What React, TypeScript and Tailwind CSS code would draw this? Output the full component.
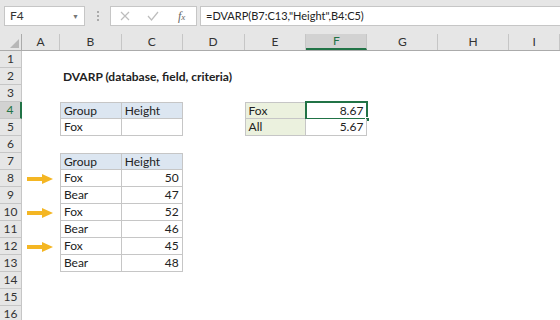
import React from "react";

const cols = ["A", "B", "C", "D", "E", "F", "G", "H", "I"];
const colWidths = [38, 62, 61, 62, 62, 61, 71, 71, 51];

const border = "border-[#c6c6c6]";

function Arrow() {
  return (
    <svg width="26" height="10" viewBox="0 0 26 10">
      <rect x="0" y="3" width="17" height="4" fill="#f4b623" />
      <path d="M15 0 L26 5 L15 10 Z" fill="#f4b623" />
    </svg>
  );
}

function tableCell(text: string, opts: { head?: boolean; right?: boolean; top?: boolean; left?: boolean; green?: boolean }) {
  return (
    <div
      className={
        "flex h-full items-center border-r border-b px-[3px] " +
        border +
        (opts.top ? " border-t" : "") +
        (opts.left ? " border-l" : "") +
        (opts.head ? " bg-[#dce6f1]" : opts.green ? " bg-[#ebf1de]" : " bg-white") +
        (opts.right ? " justify-end" : "")
      }
    >
      {text}
    </div>
  );
}

export default function App() {
  const data: [string, string][] = [
    ["Fox", "50"],
    ["Bear", "47"],
    ["Fox", "52"],
    ["Bear", "46"],
    ["Fox", "45"],
    ["Bear", "48"],
  ];

  const content = (r: number, c: number): React.ReactNode => {
    if (r === 2 && c === 1)
      return <div className="flex h-full items-center whitespace-nowrap px-[3px] font-bold">DVARP (database, field, criteria)</div>;
    if (r === 4 && c === 1) return tableCell("Group", { head: true, top: true, left: true });
    if (r === 4 && c === 2) return tableCell("Height", { head: true, top: true });
    if (r === 5 && c === 1) return tableCell("Fox", { left: true });
    if (r === 5 && c === 2) return tableCell("", {});
    if (r === 4 && c === 4) return tableCell("Fox", { green: true, top: true, left: true });
    if (r === 4 && c === 5) return tableCell("8.67", { top: true, right: true });
    if (r === 5 && c === 4) return tableCell("All", { green: true, left: true });
    if (r === 5 && c === 5) return tableCell("5.67", { right: true });
    if (r === 7 && c === 1) return tableCell("Group", { head: true, top: true, left: true });
    if (r === 7 && c === 2) return tableCell("Height", { head: true, top: true });
    if (r >= 8 && r <= 13 && c === 1) return tableCell(data[r - 8][0], { left: true });
    if (r >= 8 && r <= 13 && c === 2) return tableCell(data[r - 8][1], { right: true });
    if ((r === 8 || r === 10 || r === 12) && c === 0)
      return (
        <div className="flex h-full items-center pl-[5px]">
          <Arrow />
        </div>
      );
    return null;
  };

  return (
    <div className="h-[320px] w-[560px] overflow-hidden bg-white text-[12px] text-[#222] [font-family:Lato,'Liberation_Sans',sans-serif]">
      {/* formula bar */}
      <div className="flex h-[34px] items-start bg-[#e6e6e6] pt-[6px]">
        <div className="ml-[4px] flex h-[20px] w-[81px] items-center justify-between border border-[#c6c6c6] bg-white px-[5px] text-[#333]">
          <span>F4</span>
          <span className="text-[7px] text-[#777]">▼</span>
        </div>
        <div className="flex h-[20px] w-[25px] flex-col items-center justify-center gap-[2px]">
          <span className="h-[2px] w-[2px] bg-[#aaa]" />
          <span className="h-[2px] w-[2px] bg-[#aaa]" />
          <span className="h-[2px] w-[2px] bg-[#aaa]" />
        </div>
        <div className="flex h-[20px] w-[87px] items-center gap-[17px] border border-[#c6c6c6] bg-white pl-[9px]">
          <svg width="10" height="10" viewBox="0 0 10 10">
            <path d="M1 1 L9 9 M9 1 L1 9" stroke="#bdbdbd" strokeWidth="1.2" />
          </svg>
          <svg width="12" height="10" viewBox="0 0 12 10">
            <path d="M1 5 L4.5 9 L11 1" stroke="#bdbdbd" strokeWidth="1.2" fill="none" />
          </svg>
          <span className="ml-[2px] italic text-[#666] [font-family:'Liberation_Serif',serif]">
            f<span className="text-[9px]">x</span>
          </span>
        </div>
        <div className="ml-[3px] flex h-[20px] flex-1 items-center border border-r-0 border-[#c6c6c6] bg-white pl-[5px] text-[11px] text-[#222]">
          =DVARP(B7:C13,"Height",B4:C5)
        </div>
      </div>

      {/* column headers */}
      <div className="flex h-[17px] border-b border-[#ababab] bg-[#e6e6e6]">
        <div className="relative w-[22px] border-r border-[#ababab]">
          <svg className="absolute right-[2px] bottom-[2px]" width="9" height="9" viewBox="0 0 9 9">
            <path d="M9 0 L9 9 L0 9 Z" fill="#b7b7b7" />
          </svg>
        </div>
        {cols.map((c, i) => (
          <div
            key={c}
            style={{ width: colWidths[i] }}
            className={
              "flex items-center justify-center border-r border-[#c6c6c6] text-[#333] " +
              (c === "F" ? "border-b-2 border-b-[#217346] bg-[#d2d2d2] text-[#217346]" : "")
            }
          >
            {c}
          </div>
        ))}
      </div>

      {/* rows */}
      {Array.from({ length: 16 }, (_, k) => k + 1).map((r) => (
        <div key={r} className="flex h-[17px]">
          <div
            className={
              "flex w-[22px] items-center justify-center border-b border-r border-[#c6c6c6] text-[#333] " +
              (r === 4 ? "border-r-2 border-r-[#217346] bg-[#d2d2d2] text-[#217346]" : "bg-[#e6e6e6]")
            }
          >
            {r}
          </div>
          {cols.map((c, i) => (
            <div key={c} style={{ width: colWidths[i] }} className="relative h-[17px]">
              {content(r, i)}
              {r === 4 && c === "F" && (
                <div className="pointer-events-none absolute -top-px -left-px h-[19px] w-[63px] border-2 border-[#217346]">
                  <div className="absolute -right-[4px] -bottom-[4px] h-[5px] w-[5px] border border-white bg-[#217346]" />
                </div>
              )}
            </div>
          ))}
        </div>
      ))}
    </div>
  );
}
